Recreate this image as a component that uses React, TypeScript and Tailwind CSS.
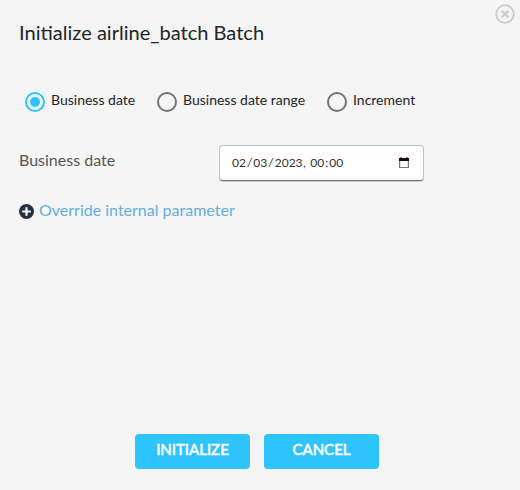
import React from "react";

function Radio({ label, checked, className }: { label: string; checked?: boolean; className: string }) {
  return (
    <label className={`flex items-start ${className}`}>
      <svg className="mt-px h-5 w-5 shrink-0" viewBox="0 0 20 20" fill="none">
        <circle cx="10" cy="10" r="9" stroke={checked ? "#2ec4ff" : "#757575"} strokeWidth="2" />
        {checked && <circle cx="10" cy="10" r="5" fill="#2ec4ff" />}
      </svg>
      <span className="ml-1.5 text-[14px] leading-[18px] whitespace-nowrap text-[#212529]">{label}</span>
    </label>
  );
}

export default function App() {
  return (
    <div className="flex h-[490px] w-[520px] flex-col bg-[#f5f5f5] font-['Lato',sans-serif]">
      <header className="flex h-[91px] justify-between pl-[19px]">
        <h1 className="mt-5 text-[20.06px] leading-6 text-[#212529]">Initialize airline_batch Batch</h1>
        <svg className="mt-1 mr-[5px] h-5 w-5" viewBox="0 0 20 20" fill="none" stroke="#cccccc" strokeWidth="1.8">
          <circle cx="10" cy="10" r="8.8" />
          <path strokeWidth="2.2" d="M6.7 6.7l6.6 6.6M13.3 6.7l-6.6 6.6" />
        </svg>
      </header>
      <div className="flex h-[54px] pl-[25px]">
        <Radio label="Business date" checked className="w-[132px]" />
        <Radio label="Business date range" className="w-[170px]" />
        <Radio label="Increment" className="" />
      </div>
      <div className="flex h-[58px] pl-[19px]">
        <span className="mt-[3px] w-[200px] text-[16px] leading-6 text-[#555555]">Business date</span>
        <div className="flex h-[36px] w-[205px] items-center justify-between rounded border border-[#b8c4d2] border-b-[#777777] bg-white pr-[13px] pl-3 shadow-[0_1px_0_#c3ccd6]">
          <span className="flex text-[12px] leading-4 whitespace-pre text-[#333333]">
            <span>02</span>
            <span className="px-px">/</span>
            <span>03</span>
            <span className="px-px">/</span>
            <span>2023</span>
            <span className="pl-[0.5px]">, </span>
            <span className="ml-[1.5px]">00</span>
            <span className="px-px">:</span>
            <span>00</span>
          </span>
          <svg className="h-3 w-3" viewBox="0 0 12 12">
            <path fill="#777777" d="M1 2h10v9H1z" />
            <path fill="#ffffff" d="M2.2 4h7.6v6H2.2z" />
            <path fill="#111111" d="M1 1h1.5V0h1v1h5V0h1v1H11v3H1z" />
          </svg>
        </div>
      </div>
      <div className="flex h-[231px] pl-[19px]">
        <svg className="mt-[1px] h-[15px] w-[15px]" viewBox="0 0 15 15">
          <circle cx="7.5" cy="7.5" r="7.5" fill="#263140" />
          <path d="M7.5 3.2v8.6M3.2 7.5h8.6" stroke="#f5f5f5" strokeWidth="2.2" />
        </svg>
        <span className="-mt-[5px] ml-[5px] text-[16px] leading-6 text-[#62aee0]">Override internal parameter</span>
      </div>
      <div className="flex gap-[14px] pl-[135px] text-[15px] leading-[30px] text-white [-webkit-text-stroke:0.6px_white]">
        <button className="flex h-[35px] w-[115px] justify-center rounded-[4px] bg-[#2ec4ff]">INITIALIZE</button>
        <button className="flex h-[35px] w-[115px] justify-center rounded-[4px] bg-[#2ec4ff]">CANCEL</button>
      </div>
    </div>
  );
}
